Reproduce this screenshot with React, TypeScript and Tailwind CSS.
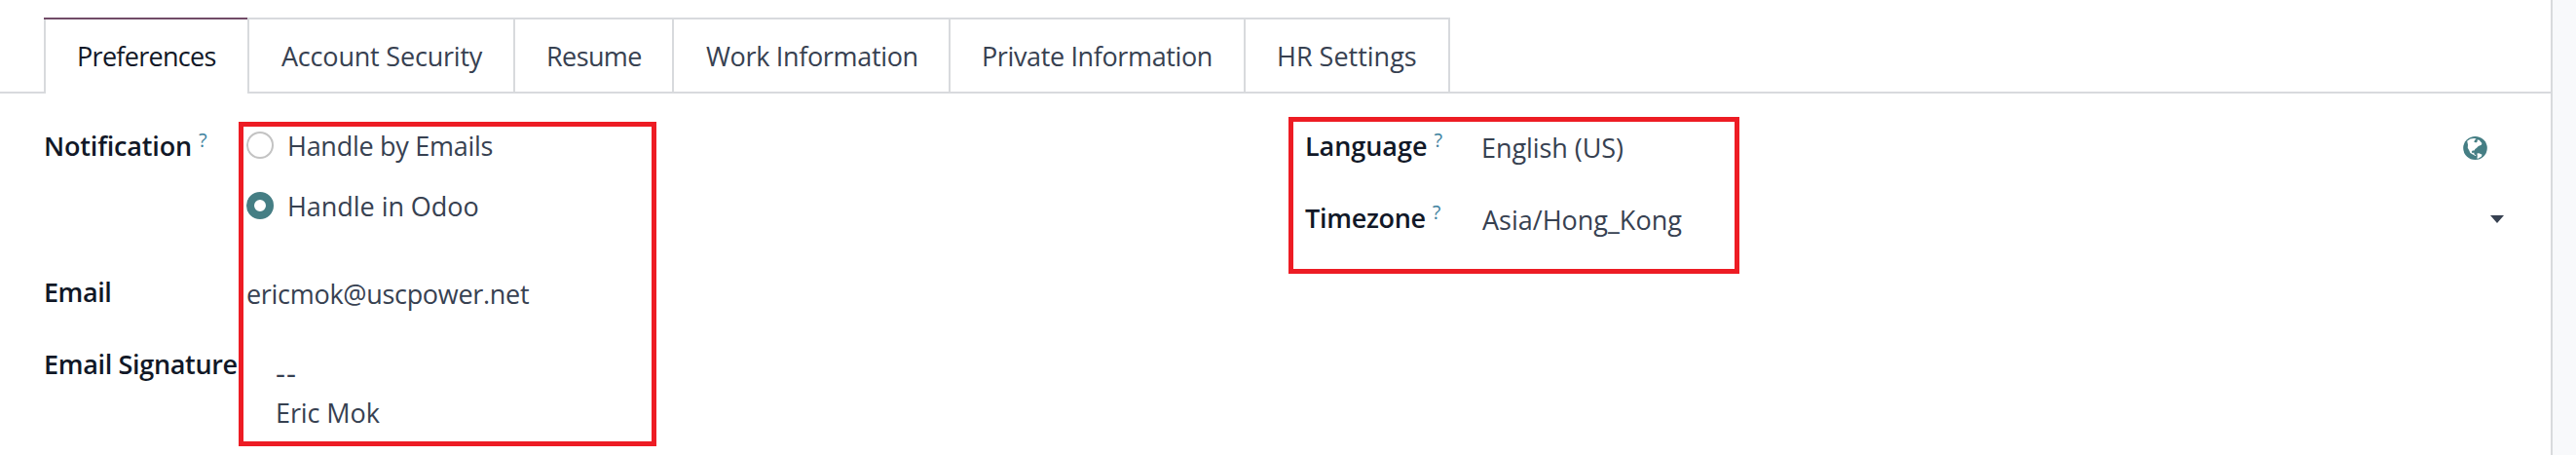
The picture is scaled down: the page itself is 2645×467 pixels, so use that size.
import React from "react";

type TabItem = { label: string; className: string };

const tabs: TabItem[] = [
  { label: "Account Security", className: "w-[273px] pl-[33px] tracking-[-0.2px]" },
  { label: "Resume", className: "w-[163px] pl-[32px] tracking-[-0.6px]" },
  { label: "Work Information", className: "w-[284px] pl-[33px] tracking-[-0.33px]" },
  { label: "Private Information", className: "w-[303px] pl-[32px] tracking-[-0.37px]" },
  { label: "HR Settings", className: "w-[210px] pl-[32px]" },
];

function Tabs() {
  return (
    <nav className="flex h-[78px] text-[27px] leading-[76px] whitespace-nowrap">
      <div className="w-[45px] border-b-2 border-[#d8dadd]" />
      <div className="w-[211px] border-x-2 border-[#d8dadd]">
        <div className="-ml-0.5 border-t-2 border-[#714b67] pl-[34px] tracking-[-0.7px] text-[#111827]">
          Preferences
        </div>
      </div>
      {tabs.map((tab) => (
        <div
          key={tab.label}
          className={`border-y-2 border-r-2 border-[#d8dadd] ${tab.className}`}
        >
          {tab.label}
        </div>
      ))}
      <div className="flex-1 border-b-2 border-[#d8dadd]" />
    </nav>
  );
}

function Label({ text, className, help }: { text: string; className: string; help?: boolean }) {
  return (
    <div className={`flex shrink-0 font-semibold text-[#111827] ${className}`}>
      <span>{text}</span>
      {help && (
        <sup className="top-0 ml-[7px] text-[20px] leading-[27px] font-normal tracking-normal text-[#3f83a0]">
          ?
        </sup>
      )}
    </div>
  );
}

function Radio({ checked }: { checked?: boolean }) {
  return checked ? (
    <span className="-mt-0.5 size-7 rounded-full border-8 border-[#457e84] bg-white" />
  ) : (
    <span className="-mt-0.5 size-7 rounded-full border-2 border-[#c3c3c3] bg-white" />
  );
}

function GlobeIcon() {
  return (
    <svg viewBox="0 0 25 24" className="h-6 w-[25px]">
      <ellipse cx="12.5" cy="12" rx="12.3" ry="12" fill="#457e84" />
      <path
        d="M4.2 4.8 7.6 2.6 11.6 2l2 .6-1.4 1.2-1 1.6 2 1.2 1.6-1.4-.2-1.8 2 .4 2.8 3.2-.6 1.8-3 1.2-2 2-1.4 1-.8 1.6-1.8-.2-1 1.4.8 1.4 1.6-.6.4 1.8 1.8.8-.6.8-2.8-1.4-2.6-1.6-1.2-2.8-1.4-2.4.2-3.2Z"
        fill="#fff"
      />
      <path d="m14.4 17.6 2-.4 3.2 1.6-.8 2-3.4 2-1-.4.4-2.4Z" fill="#fff" />
    </svg>
  );
}

export default function App() {
  return (
    <div className="flex h-[467px] w-[2645px] overflow-hidden bg-[#f8f9fb] font-['Open_Sans',sans-serif] text-[27px] leading-10 whitespace-nowrap text-[#374151]">
      <main className="relative h-full w-[2621px] border-r-2 border-[#d8dadd] bg-white pt-[18px]">
        <Tabs />
        <div className="flex pt-[34px] pl-[45px]">
          <section className="w-[1295px]">
            <div className="flex h-[150px]">
              <Label text="Notification" className="w-[208px] tracking-[-0.17px]" help />
              <div className="flex flex-col gap-[22px]">
                <label className="flex h-10 items-center">
                  <Radio />
                  <span className="ml-[14px] tracking-[-0.27px]">Handle by Emails</span>
                </label>
                <label className="flex h-10 items-center">
                  <Radio checked />
                  <span className="ml-[14px] tracking-[-0.05px]">Handle in Odoo</span>
                </label>
              </div>
            </div>
            <div className="flex h-[74px]">
              <Label text="Email" className="w-[208px] tracking-[-0.45px]" />
              <span className="pt-0.5 tracking-[-0.3px]">ericmok@uscpower.net</span>
            </div>
            <div className="flex">
              <Label text="Email Signature" className="w-[208px] tracking-[-0.33px]" />
              <div className="pt-[7px] pl-[30px] leading-[42px]">
                <p className="h-[42px] text-[31px] tracking-[1px]">--</p>
                <p className="tracking-[-0.1px]">Eric Mok</p>
              </div>
            </div>
          </section>
          <section className="flex-1">
            <div className="flex h-[74px]">
              <Label text="Language" className="w-[181px] tracking-[-0.05px]" help />
              <span className="flex-1 pt-0.5 tracking-[-0.07px]">English (US)</span>
              <div className="mr-[65px] pt-[10px]">
                <GlobeIcon />
              </div>
            </div>
            <div className="flex">
              <Label text="Timezone" className="w-[182px] tracking-[-0.3px]" help />
              <span className="flex-1 pt-0.5">Asia/Hong_Kong</span>
              <svg viewBox="0 0 14 8" className="mt-[17px] mr-[48px] h-2 w-[14px]">
                <path d="M0 0h14L7 8Z" fill="#374151" />
              </svg>
            </div>
          </section>
        </div>
        <div className="absolute top-[125px] left-[245px] h-[333px] w-[429px] border-5 border-[#ed1c24]" />
        <div className="absolute top-[120px] left-[1323px] h-[161px] w-[463px] border-5 border-[#ed1c24]" />
      </main>
    </div>
  );
}
